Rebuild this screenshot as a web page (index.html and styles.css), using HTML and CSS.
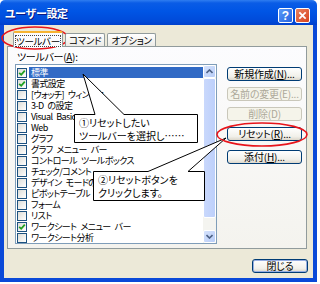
FILE: index.html
```html
<!DOCTYPE html>
<html lang="ja">
<head>
    <meta charset="UTF-8">
    <title>ユーザー設定</title>
    <link rel="stylesheet" href="styles.css">
</head>
<body>
    <div class="window">
        <div class="titlebar">
            <span class="title">ユーザー設定</span>
            <div class="caption-btns">
                <span class="cap help">?</span>
                <span class="cap close">
                    <svg width="15" height="15" viewBox="0 0 15 15"><path d="M4.5 4.5 L10.5 10.5 M10.5 4.5 L4.5 10.5" stroke="#fff" stroke-width="2" stroke-linecap="square"/></svg>
                </span>
            </div>
        </div>
        <div class="frame">
            <div class="tabs">
                <span class="tab active"><span class="focus">ツールバー</span></span>
                <span class="tab">コマンド</span>
                <span class="tab">オプション</span>
            </div>
            <div class="panel">
                <div class="label">ツールバー(<u>A</u>):</div>
                <div class="panel-row">
                    <div class="listbox">
                        <ul class="items">
                            <li class="item selected"><span class="check on"></span><span class="name">標準</span></li>
                            <li class="item"><span class="check on"></span><span class="name">書式設定</span></li>
                            <li class="item"><span class="check"></span><span class="name">[ウォッチ] ウィンドウ</span></li>
                            <li class="item"><span class="check"></span><span class="name">3-D の設定</span></li>
                            <li class="item"><span class="check"></span><span class="name">Visual Basic</span></li>
                            <li class="item"><span class="check"></span><span class="name">Web</span></li>
                            <li class="item"><span class="check"></span><span class="name">グラフ</span></li>
                            <li class="item"><span class="check"></span><span class="name">グラフ メニュー バー</span></li>
                            <li class="item"><span class="check"></span><span class="name">コントロール ツールボックス</span></li>
                            <li class="item"><span class="check"></span><span class="name">チェック/コメント</span></li>
                            <li class="item"><span class="check"></span><span class="name">デザイン モードの終了</span></li>
                            <li class="item"><span class="check"></span><span class="name">ピボットテーブル</span></li>
                            <li class="item"><span class="check"></span><span class="name">フォーム</span></li>
                            <li class="item"><span class="check"></span><span class="name">リスト</span></li>
                            <li class="item"><span class="check on"></span><span class="name">ワークシート メニュー バー</span></li>
                            <li class="item"><span class="check"></span><span class="name">ワークシート分析</span></li>
                        </ul>
                        <div class="scrollbar">
                            <span class="sb-btn"><svg width="7" height="5" viewBox="0 0 7 5"><path d="M0.5 4 L3.5 1 L6.5 4" fill="none" stroke="#4d6185" stroke-width="1.6"/></svg></span>
                            <span class="sb-thumb"><span class="grip"></span></span>
                            <span class="sb-track"></span>
                            <span class="sb-btn"><svg width="7" height="5" viewBox="0 0 7 5"><path d="M0.5 1 L3.5 4 L6.5 1" fill="none" stroke="#4d6185" stroke-width="1.6"/></svg></span>
                        </div>
                    </div>
                    <div class="side">
                        <span class="btn">新規作成(<u>N</u>)...</span>
                        <span class="btn disabled">名前の変更(E)...</span>
                        <span class="btn disabled">削除(D)</span>
                        <span class="btn">リセット(<u>R</u>)...</span>
                        <span class="btn spaced">添付(<u>H</u>)...</span>
                    </div>
                </div>
            </div>
            <div class="footer">
                <span class="btn default">閉じる</span>
            </div>
        </div>
    </div>

    <!-- callouts and red marks drawn over the dialog -->
    <div class="callout one">
        <svg class="callout-shape" width="126" height="72" viewBox="0 -42 126 72"><path d="M0.5 0.5 H21 L9 -40 L50 0.5 H123.5 V28.5 H0.5 Z" fill="#fff" stroke="#000"/></svg>
        <div class="callout-text">①リセットしたい<br>ツールバーを選択し……</div>
    </div>
    <div class="callout two">
        <svg class="callout-shape" width="140" height="66" viewBox="0 -35 140 66"><path d="M0.5 0.5 H55 L133 -33 L95 0.5 H111.5 V29.5 H0.5 Z" fill="#fff" stroke="#000"/></svg>
        <div class="callout-text">②リセットボタンを<br>クリックします。</div>
    </div>
    <svg class="marks" width="320" height="284" viewBox="0 0 320 284">
        <ellipse cx="35" cy="38" rx="33" ry="11" fill="none" stroke="#e8141b" stroke-width="1.6"/>
        <ellipse cx="262" cy="134.5" rx="45" ry="11.5" fill="none" stroke="#e8141b" stroke-width="1.6"/>
    </svg>
</body>
</html>
```

FILE: styles.css
```css
body {
    margin: 0;
    width: 320px;
    height: 284px;
    background-color: #fff;
    font-family: "Noto Sans CJK JP", sans-serif;
    font-size: 10px;
    color: #000;
    position: relative;
    overflow: hidden;
}

.window {
    width: 317px;
}

.titlebar {
    height: 25px;
    box-sizing: border-box;
    display: flex;
    justify-content: space-between;
    align-items: flex-start;
    padding: 0 7px 0 5px;
    border-radius: 5px 5px 0 0;
    background: linear-gradient(#2f7df0 0, #0a5ce6 3px, #0055e5 45%, #004ad9 85%, #0040cc 100%);
}

.title {
    margin-top: 6px;
    color: #fff;
    font-size: 11px;
    font-weight: bold;
    line-height: 14px;
    letter-spacing: -0.3px;
    font-feature-settings: "palt";
    text-shadow: 1px 1px 0 #0a1883;
}

.caption-btns {
    display: flex;
    gap: 2px;
    margin-top: 8px;
}

.cap {
    width: 15px;
    height: 15px;
    box-sizing: border-box;
    border: 1px solid #fff;
    border-radius: 2px;
    display: flex;
    align-items: center;
    justify-content: center;
}

.help {
    background: linear-gradient(135deg, #5a9af8, #2763e0);
    color: #fff;
    font-family: "Liberation Sans", sans-serif;
    font-weight: bold;
    font-size: 12px;
}

.close {
    background: linear-gradient(135deg, #e8825f, #d9421d);
}

.close svg {
    display: block;
}

.frame {
    height: 257px;
    box-sizing: border-box;
    background-color: #ece9d8;
    border: 4px solid #0a49d8;
    border-top: 0;
    padding: 6px 6px 0 3px;
}

.tabs {
    display: flex;
    align-items: flex-end;
    padding-left: 6px;
    height: 15px;
    position: relative;
    z-index: 1;
}

.tab {
    height: 13px;
    box-sizing: border-box;
    padding: 0 3px;
    margin-right: 2px;
    border: 1px solid #919b9c;
    border-bottom: 0;
    border-radius: 2px 2px 0 0;
    background: linear-gradient(#fff, #ecebe6);
    font-size: 9.5px;
    line-height: 12px;
    letter-spacing: -0.3px;
    font-feature-settings: "palt";
}

.tab.active {
    width: 50px;
    height: 16px;
    margin-bottom: -1px;
    padding: 2px 1px 0;
    border-top: 2px solid #f7b431;
    background: #fcfcfe;
}

.focus {
    display: block;
    border: 1px dotted #444;
    line-height: 10px;
    text-align: center;
    white-space: nowrap;
}

.panel {
    height: 203px;
    box-sizing: border-box;
    border: 1px solid #919b9c;
    background: linear-gradient(#fcfcfe, #f4f3ee);
    padding: 4px 0 0 7px;
}

.label {
    height: 13px;
    line-height: 12px;
    padding-left: 2px;
    letter-spacing: -0.3px;
    font-feature-settings: "palt";
}

.panel-row {
    display: flex;
}

.listbox {
    width: 202px;
    height: 180px;
    box-sizing: border-box;
    border: 1px solid #7f9db9;
    background-color: #fff;
    display: flex;
}

.items {
    list-style: none;
    margin: 0;
    padding: 2px 0 0 1px;
    flex: 1;
    min-width: 0;
}

.item {
    height: 11px;
    display: flex;
    align-items: center;
    white-space: nowrap;
    overflow: hidden;
    font-size: 9px;
    letter-spacing: -0.6px;
    word-spacing: 2.5px;
    font-feature-settings: "palt";
}

.check {
    width: 10px;
    height: 10px;
    box-sizing: border-box;
    border: 1px solid #1c5180;
    background: linear-gradient(135deg, #dcdcd7, #fff);
    flex: none;
}

.check.on {
    background: url("data:image/svg+xml,%3Csvg xmlns='http://www.w3.org/2000/svg' width='8' height='8'%3E%3Cpath d='M1.2 3.8 L3.2 5.8 L6.8 1.6' fill='none' stroke='%2321a121' stroke-width='1.8'/%3E%3C/svg%3E") no-repeat center, linear-gradient(135deg, #dcdcd7, #fff);
}

.name {
    margin-left: 2px;
    padding-left: 2px;
    line-height: 11px;
    flex: 1;
}

.item.selected .name {
    background-color: #316ac5;
    color: #fff;
}

.scrollbar {
    width: 13px;
    flex: none;
    display: flex;
    flex-direction: column;
    background-color: #f4f4f0;
}

.sb-btn {
    height: 13px;
    box-sizing: border-box;
    border: 1px solid #fff;
    border-radius: 2px;
    background: linear-gradient(135deg, #d5e2fc, #b8cdf8);
    display: flex;
    align-items: center;
    justify-content: center;
}

.sb-thumb {
    height: 140px;
    box-sizing: border-box;
    border: 1px solid #fff;
    border-radius: 2px;
    background: linear-gradient(90deg, #c9d8fc, #bdd0fb);
    display: flex;
    align-items: center;
    justify-content: center;
}

.grip {
    width: 5px;
    height: 6px;
    background: repeating-linear-gradient(#eef3fe 0 1px, #8cb0f8 1px 2px);
}

.sb-track {
    flex: 1;
}

.side {
    margin-left: 10px;
    padding-top: 3px;
    width: 75px;
    display: flex;
    flex-direction: column;
    gap: 6px;
}

.btn {
    height: 14px;
    box-sizing: border-box;
    border: 1px solid #003c74;
    border-radius: 3px;
    background: linear-gradient(#fff, #f1f0ea 70%, #dcd7cb);
    line-height: 12px;
    text-align: center;
    letter-spacing: -0.2px;
    font-feature-settings: "palt";
}

.btn.disabled {
    border-color: #c9c7ba;
    background: #f5f4ea;
    color: #aca899;
}

.btn.spaced {
    margin-top: 3px;
}

.footer {
    display: flex;
    justify-content: flex-end;
    margin: 10px -1px 0 0;
}

.btn.default {
    width: 56px;
    box-shadow: inset 0 0 0 1px #97aee2;
}

.callout {
    position: absolute;
}

.callout.one {
    left: 74px;
    top: 115px;
    width: 124px;
    height: 29px;
}

.callout.two {
    left: 93px;
    top: 172px;
    width: 112px;
    height: 30px;
}

.callout-shape {
    position: absolute;
    left: 0;
    bottom: 0;
    overflow: visible;
}

.callout-text {
    position: relative;
    padding: 1px 0 0 5px;
    line-height: 13px;
    font-size: 10px;
    font-feature-settings: "palt";
}

.marks {
    position: absolute;
    left: 0;
    top: 0;
    pointer-events: none;
}
```
